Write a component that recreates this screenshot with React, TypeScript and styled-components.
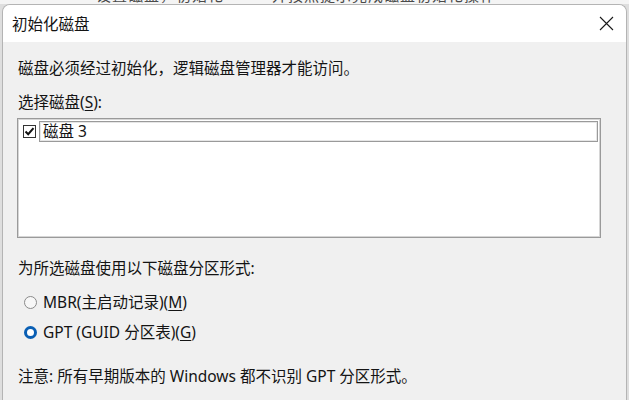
import React from "react";
import styled, { createGlobalStyle } from "styled-components";

const Global = createGlobalStyle`
  html, body { margin: 0; padding: 0; }
  body { font-family: "Noto Sans", "Noto Sans CJK SC", sans-serif; }
  * { box-sizing: border-box; }
`;

const Page = styled.div`
  width: 629px;
  height: 400px;
  overflow: hidden;
  background: #dedede;
  display: flex;
  flex-direction: column;
`;

const BackStrip = styled.div`
  height: 4px;
  overflow: hidden;
  padding-left: 96px;
  background: #f4f4f4;
`;

const BackText = styled.div`
  font-size: 15px;
  line-height: 18px;
  margin-top: -14px;
  color: #4a4a4a;
  white-space: nowrap;
  letter-spacing: 1px;
`;

const Row = styled.div`
  flex: 1;
  display: flex;
  padding-left: 2px;
`;

const Dialog = styled.div`
  width: 625px;
  height: 100%;
  background: #f0f0f0;
  border: 1px solid #b4b4b4;
  border-bottom: none;
  border-radius: 8px 8px 0 0;
  overflow: hidden;
  display: flex;
  flex-direction: column;
`;

const TitleBar = styled.div`
  height: 37px;
  background: #ffffff;
  display: flex;
  align-items: center;
  justify-content: space-between;
  padding: 0 12px 0 9px;
`;

const Title = styled.div`
  font-size: 15.5px;
  color: #141414;
  line-height: 22px;
`;

const Body = styled.div`
  flex: 1;
  padding: 0 14px 0 15px;
  display: flex;
  flex-direction: column;
`;

const Text = styled.div<{ $mt: number }>`
  font-size: 15.5px;
  line-height: 22px;
  color: #141414;
  margin-top: ${(p) => p.$mt}px;
  white-space: nowrap;
`;

const U = styled.span`
  text-decoration: underline;
  text-underline-offset: 2px;
`;

const ListBox = styled.div`
  margin-top: 5px;
  margin-left: -1px;
  width: 584px;
  height: 120px;
  background: #ffffff;
  border: 1px solid #9a9a9a;
  box-shadow: inset 0 0 0 1px #d6d6d6;
  padding: 2px 2px 0 5px;
`;

const Item = styled.div`
  display: flex;
  align-items: center;
  gap: 3px;
`;

const CheckBox = styled.div`
  width: 13px;
  height: 13px;
  border: 1px solid #333;
  background: #fff;
  display: flex;
  align-items: center;
  justify-content: center;
`;

const ItemLabel = styled.div`
  flex: 1;
  height: 21px;
  border: 1px solid #9a9a9a;
  box-shadow: inset 0 0 0 1px #e6e6e6;
  font-size: 15.5px;
  line-height: 19px;
  padding-left: 3px;
  color: #141414;
`;

const RadioRow = styled.div<{ $mt: number }>`
  display: flex;
  align-items: center;
  gap: 6px;
  margin-top: ${(p) => p.$mt}px;
  padding-left: 6px;
  font-size: 15.5px;
  line-height: 22px;
  color: #141414;
`;

const Radio = styled.div<{ $on?: boolean }>`
  width: 13px;
  height: 13px;
  border-radius: 50%;
  background: ${(p) => (p.$on ? "#ffffff" : "#f7f7f7")};
  border: ${(p) => (p.$on ? "3.5px solid #0a5fb4" : "1px solid #8a8a8a")};
`;

export default function App() {
  return (
    <>
      <Global />
      <Page>
        <BackStrip>
          <BackText>设置磁盘，初始化　　　并按照提示完成磁盘初始化操作</BackText>
        </BackStrip>
        <Row>
          <Dialog>
            <TitleBar>
              <Title>初始化磁盘</Title>
              <svg width="15" height="15" viewBox="0 0 15 15">
                <path d="M1 1 L14 14 M14 1 L1 14" stroke="#1a1a1a" strokeWidth="1.1" fill="none" />
              </svg>
            </TitleBar>
            <Body>
              <Text $mt={15}>磁盘必须经过初始化，逻辑磁盘管理器才能访问。</Text>
              <Text $mt={12}>
                选择磁盘(<U>S</U>):
              </Text>
              <ListBox>
                <Item>
                  <CheckBox>
                    <svg width="11" height="11" viewBox="0 0 11 11">
                      <path d="M1.5 5.5 L4.2 8.2 L9.5 2.2" stroke="#111" strokeWidth="2" fill="none" />
                    </svg>
                  </CheckBox>
                  <ItemLabel>磁盘 3</ItemLabel>
                </Item>
              </ListBox>
              <Text $mt={19}>为所选磁盘使用以下磁盘分区形式:</Text>
              <RadioRow $mt={12}>
                <Radio />
                <span>
                  MBR(主启动记录)(<U>M</U>)
                </span>
              </RadioRow>
              <RadioRow $mt={8}>
                <Radio $on />
                <span>
                  GPT (GUID 分区表)(<U>G</U>)
                </span>
              </RadioRow>
              <Text $mt={22}>注意: 所有早期版本的 Windows 都不识别 GPT 分区形式。</Text>
            </Body>
          </Dialog>
        </Row>
      </Page>
    </>
  );
}
